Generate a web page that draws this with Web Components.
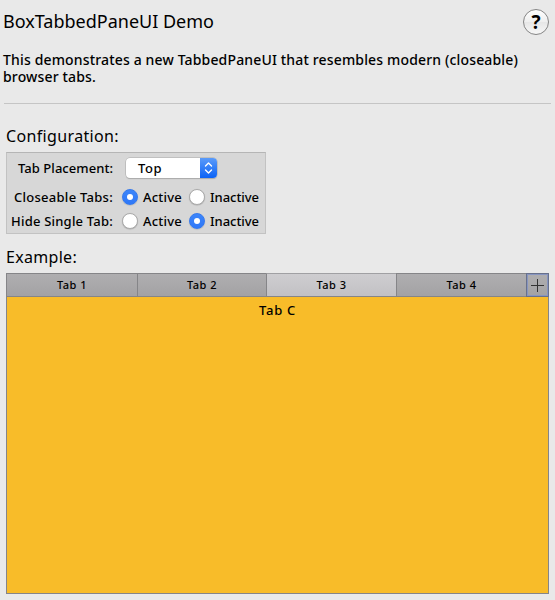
<!DOCTYPE html>
<html lang="en"><head><meta charset="utf-8"><title>BoxTabbedPaneUI Demo</title>
<style>html,body{margin:0;height:600px;background:#e9e9e9;overflow:hidden}</style></head>
<body><demo-window></demo-window>
<script>
const define=(name,html,setup)=>customElements.define(name,class extends HTMLElement{
  connectedCallback(){
    if(this.shadowRoot)return;
    const t=document.createElement('template');t.innerHTML=html;
    this.attachShadow({mode:'open'}).append(t.content.cloneNode(true));
    if(setup)setup(this,this.shadowRoot);
  }
});
// Label whose tracking is adjusted so its longest line fills the declared width.
define('fit-text',`<style>:host{display:block;flex:none;white-space:nowrap}span{display:inline-block}</style><span><slot></slot></span>`,(el,root)=>{
  const w=+el.getAttribute('width'),s=root.querySelector('span');
  const chars=Math.max(...el.innerHTML.split('<br>').map(line=>line.length));
  el.style.width=w+'px';
  s.style.letterSpacing=(w-s.getBoundingClientRect().width)/chars+'px';
});
define('help-button',`<style>:host{display:grid;place-items:center;box-sizing:border-box;width:26px;height:26px;border:1px solid #858585;border-radius:50%;background:linear-gradient(#fff,#eee 50%,#e6e6e6 51%,#f7f7f7);font:bold 19px/24px "Noto Sans",sans-serif;color:#000}</style><span>?</span>`);
define('radio-button',`<style>:host{display:flex;align-items:center;gap:5px}i{box-sizing:border-box;width:16px;height:16px;border-radius:50%;background:#fff;border:1px solid #aaa;box-shadow:0 .5px 1px #0003;display:grid;place-items:center}:host([checked]) i{background:linear-gradient(#3c85fa,#2f78f8);border-color:#3479ee}:host([checked]) i::after{content:"";width:6px;height:6px;border-radius:50%;background:#fff}</style><i></i><slot></slot>`);
define('select-box',`<style>:host{display:flex;box-sizing:border-box;width:91px;height:20px;border-radius:4px;background:#fff;box-shadow:0 0 0 .5px #aaa,0 1px 1px #0003;overflow:hidden;padding-left:12px;line-height:20px}svg{margin-left:auto;flex:none;background:linear-gradient(#5b9bf9,#0a62f6)}</style><slot></slot><svg width="17" height="20" viewBox="0 0 17 20" fill="none" stroke="#fff" stroke-width="1.4" stroke-linecap="round" stroke-linejoin="round"><path d="M5.5 8 8.5 5l3 3M5.5 12l3 3 3-3"/></svg>`);
define('config-panel',`<style>:host{display:grid;grid-template-rows:28px 30px 18px;align-content:start;box-sizing:border-box;width:260px;height:82px;margin-left:6px;padding-top:1px;border:1px solid #c2c2c2;border-top-color:#b5b5b5;background:#d7d7d7;font-size:13px;line-height:20px}div{display:flex;align-items:center}.l{width:106px;display:flex;justify-content:flex-end;margin-right:9px}.s .l{margin-right:13px}.a{width:67px}</style>
<div class="s"><span class="l"><fit-text width="95">Tab Placement:</fit-text></span><select-box><fit-text width="24">Top</fit-text></select-box></div>
<div><span class="l"><fit-text width="99">Closeable Tabs:</fit-text></span><radio-button class="a" checked><fit-text width="39">Active</fit-text></radio-button><radio-button><fit-text width="49">Inactive</fit-text></radio-button></div>
<div><span class="l"><fit-text width="102">Hide Single Tab:</fit-text></span><radio-button class="a"><fit-text width="39">Active</fit-text></radio-button><radio-button checked><fit-text width="49">Inactive</fit-text></radio-button></div>`);
define('box-tab',`<style>:host{display:flex;justify-content:center;box-sizing:border-box;height:24px;border:solid #858588;border-width:1px 0 1px 1px;background:linear-gradient(#afaeb0,#a3a2a4);font-size:11px;line-height:21px}:host([selected]){background:linear-gradient(#cecdd0,#c2c1c4);border-top-color:#a0a0a3}</style><slot></slot>`);
define('add-tab',`<style>:host{display:block;box-sizing:border-box;height:24px;border:1px solid #68718c;box-shadow:inset 0 0 0 1px #8795c0;background:linear-gradient(#afaeb0,#a3a2a4)}svg{display:block}</style><svg width="21" height="22" fill="none" stroke="#333"><path d="M4 11.5h13M10.5 5v13"/></svg>`);
define('tabbed-pane',`<style>:host{display:block;width:543px;margin-left:6px}nav{display:grid;grid-template-columns:131px 129px 130px 130px 23px}main{box-sizing:border-box;height:297px;border:1px solid #858588;border-top:0;background:#f8bc29;display:flex;justify-content:center;font-size:13px;line-height:26px}</style>
<nav><box-tab><fit-text width="30">Tab 1</fit-text></box-tab><box-tab><fit-text width="30">Tab 2</fit-text></box-tab><box-tab selected><fit-text width="30">Tab 3</fit-text></box-tab><box-tab><fit-text width="30">Tab 4</fit-text></box-tab><add-tab></add-tab></nav><main><fit-text width="37">Tab C</fit-text></main>`);
define('demo-window',`<style>:host{display:flex;flex-direction:column;box-sizing:border-box;width:555px;height:600px;padding-top:9px;background:#e9e9e9;color:#000;font:500 14px/17px "Noto Sans",sans-serif}
header{display:flex;justify-content:space-between;height:42px;padding:0 6px 0 3px;font-size:18px;line-height:24px;font-weight:400}
.intro{height:52px;padding-left:3px}hr{width:547px;height:1px;border:0;margin:0 0 22px 4px;background:#c5c5c5}
h2{font-size:16px;font-weight:400;line-height:20px;height:26px;margin:0 0 0 6px}.ex{margin-top:13px}</style>
<header><fit-text width="211">BoxTabbedPaneUI Demo</fit-text><help-button></help-button></header>
<div class="intro"><fit-text width="515">This demonstrates a new TabbedPaneUI that resembles modern (closeable)<br>browser tabs.</fit-text></div>
<hr><h2><fit-text width="113">Configuration:</fit-text></h2><config-panel></config-panel><h2 class="ex"><fit-text width="71">Example:</fit-text></h2><tabbed-pane></tabbed-pane>`);
</script></body></html>
